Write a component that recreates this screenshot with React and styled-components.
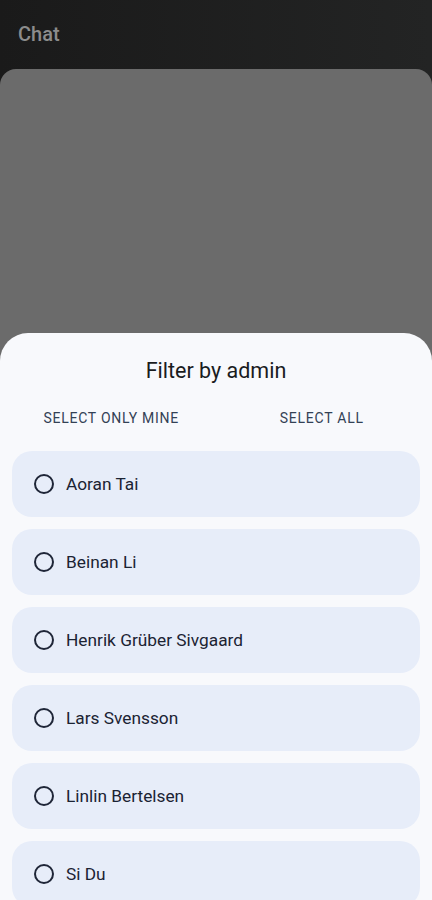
import React from "react";
import styled, { createGlobalStyle } from "styled-components";

const Global = createGlobalStyle`
  html, body { margin: 0; padding: 0; background: #1e1e1e; }
  * { box-sizing: border-box; }
`;

const Screen = styled.div`
  position: relative;
  width: 432px;
  height: 900px;
  overflow: hidden;
  display: flex;
  flex-direction: column;
  background: linear-gradient(90deg, #1a1a1a 0%, #232424 100%);
  font-family: Roboto, "Noto Sans", sans-serif;
`;

const TopBar = styled.div`
  height: 69px;
  flex-shrink: 0;
  display: flex;
  align-items: center;
  padding: 0 18px 2px;
  color: #8c8c8c;
  font-size: 20px;
  font-weight: 500;
`;

const Backdrop = styled.div`
  flex: 1;
  background: #6b6b6b;
  border-radius: 16px 16px 0 0;
`;

const Sheet = styled.div`
  position: absolute;
  left: 0;
  right: 0;
  bottom: 0;
  height: 567px;
  overflow: hidden;
  background: #f8f9fc;
  border-radius: 28px 28px 0 0;
  padding-top: 23px;
  display: flex;
  flex-direction: column;
  & > * { flex-shrink: 0; }
`;

const Title = styled.h2`
  margin: 0;
  text-align: center;
  font-size: 21.5px;
  line-height: 30px;
  font-weight: 400;
  color: #1a1c1e;
`;

const Actions = styled.div`
  display: grid;
  grid-template-columns: 1fr 1fr;
  margin-top: 14px;
  height: 36px;
  padding: 0 5px 0 6px;
`;

const TextButton = styled.button`
  border: none;
  background: none;
  font-family: inherit;
  font-size: 14px;
  font-weight: 400;
  letter-spacing: 0.75px;
  color: #334155;
  text-transform: uppercase;
  justify-self: center;
  padding: 0 8px;
  cursor: pointer;
`;

const List = styled.div`
  display: flex;
  flex-direction: column;
  gap: 12px;
  padding: 15px 12px 0;
`;

const Item = styled.div`
  height: 66px;
  flex-shrink: 0;
  border-radius: 20px;
  background: #e7edf9;
  display: flex;
  align-items: center;
  padding-left: 22px;
  gap: 12px;
`;

const Radio = styled.span`
  width: 20px;
  height: 20px;
  border-radius: 50%;
  border: 2.4px solid #1f2638;
  flex-shrink: 0;
`;

const Name = styled.span`
  font-size: 17.3px;
  color: #1b2333;
`;

const admins = [
  "Aoran Tai",
  "Beinan Li",
  "Henrik Grüber Sivgaard",
  "Lars Svensson",
  "Linlin Bertelsen",
  "Si Du",
];

export default function App() {
  return (
    <>
      <Global />
      <Screen>
        <TopBar>Chat</TopBar>
        <Backdrop />
        <Sheet>
          <Title>Filter by admin</Title>
          <Actions>
            <TextButton>Select only mine</TextButton>
            <TextButton>Select all</TextButton>
          </Actions>
          <List>
            {admins.map((n) => (
              <Item key={n}>
                <Radio />
                <Name>{n}</Name>
              </Item>
            ))}
          </List>
        </Sheet>
      </Screen>
    </>
  );
}
